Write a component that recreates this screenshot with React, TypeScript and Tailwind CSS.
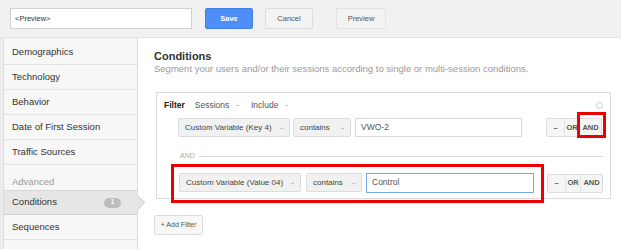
import React from "react";

const navItems = ["Demographics", "Technology", "Behavior", "Date of First Session", "Traffic Sources"];

function Caret() {
  return <span className="ml-[7px] text-[8px] text-[#777]">-</span>;
}

function Select({ label, width }: { label: string; width: string }) {
  return (
    <div
      className={`${width} h-[19px] flex items-center justify-between px-[6px] bg-[#f1f1f1] border border-[#dcdcdc] rounded-[2px] text-[8px] text-[#444]`}
    >
      <span>{label}</span>
      <span className="text-[8px] text-[#888]">-</span>
    </div>
  );
}

function OpButtons() {
  return (
    <div className="flex h-[19px] border border-[#dcdcdc] rounded-[2px] bg-[#f5f5f5] text-[7.5px] text-[#555] font-bold">
      <div className="w-[18px] flex items-center justify-center border-r border-[#e3e3e3]">–</div>
      <div className="w-[15px] flex items-center justify-center border-r border-[#e3e3e3]">OR</div>
      <div className="w-[21px] flex items-center justify-center">AND</div>
    </div>
  );
}

export default function App() {
  return (
    <div className="w-[621px] h-[249px] overflow-hidden bg-white font-['Liberation_Sans',Arial,sans-serif]">
      {/* top bar */}
      <div className="h-[38px] bg-[#f1f1f1] border-b border-[#e2e2e2] flex items-center pl-[10px]">
        <div className="w-[182px] h-[21px] bg-white border border-[#d0d0d0] flex items-center px-[4px] text-[7.5px] text-[#333]">
          &lt;Preview&gt;
        </div>
        <button className="ml-[13px] w-[48px] h-[21px] bg-[#4d8ef8] border border-[#3f7fe8] rounded-[2px] text-white text-[7.5px] font-bold">
          Save
        </button>
        <button className="ml-[12px] w-[48px] h-[21px] bg-[#f3f3f3] border border-[#dcdcdc] rounded-[2px] text-[#555] text-[7.5px]">
          Cancel
        </button>
        <button className="ml-[23px] w-[50px] h-[21px] bg-[#f3f3f3] border border-[#e2e2e2] rounded-[2px] text-[#555] text-[7.5px]">
          Preview
        </button>
      </div>

      <div className="flex h-[211px]">
        {/* sidebar */}
        <div className="w-[139px] pl-[3px] bg-[#ececec] flex flex-col">
          <div className="flex-1 bg-[#f7f7f7] border-l border-r border-[#dcdcdc] pt-[2px]">
            {navItems.map((item) => (
              <div
                key={item}
                className="h-[25px] flex items-center pl-[8px] border-b border-[#e2e2e2] text-[9.5px] text-[#333]"
              >
                {item}
              </div>
            ))}
            <div className="h-[25px] flex items-end pl-[8px] pb-[1px] text-[9.5px] text-[#999]">Advanced</div>
            <div className="relative h-[25px] flex items-center pl-[8px] pr-[16px] bg-[#e6e6e6] border-y border-[#d6d6d6] text-[9.5px] text-[#333]">
              <span className="flex-1">Conditions</span>
              <span className="w-[17px] h-[10px] rounded-full bg-[#bdbdbd] text-white text-[7px] font-bold flex items-center justify-center">
                1
              </span>
              <span className="absolute right-[-6px] top-[6px] w-[11px] h-[11px] rotate-45 bg-[#e6e6e6] border-t border-r border-[#d6d6d6]" />
            </div>
            <div className="h-[25px] flex items-center pl-[8px] border-b border-[#e2e2e2] text-[9.5px] text-[#333]">
              Sequences
            </div>
          </div>
        </div>

        {/* main */}
        <div className="flex-1 pl-[16px] pr-[10px] pt-[12px]">
          <div className="text-[11px] font-bold text-[#333] leading-[13px]">Conditions</div>
          <div className="text-[9.5px] text-[#9a9a9a] leading-[12px]">
            Segment your users and/or their sessions according to single or multi-session conditions.
          </div>

          <div className="mt-[17px] ml-[2px] w-[455px] h-[107px] border border-[#dcdcdc] pl-[7px] pr-[7px] pt-[7px]">
            <div className="flex items-center h-[10px] text-[8.5px]">
              <span className="font-bold text-[#222]">Filter</span>
              <span className="ml-[10px] text-[#555]">Sessions</span>
              <Caret />
              <span className="ml-[12px] text-[#555]">Include</span>
              <Caret />
              <span className="ml-auto w-[7px] h-[7px] rounded-full border border-[#ccc]" />
            </div>

            <div className="flex items-center mt-[8px] ml-[14px]">
              <Select label="Custom Variable (Key 4)" width="w-[112px]" />
              <div className="ml-[3px]">
                <Select label="contains" width="w-[58px]" />
              </div>
              <div className="ml-[4px] w-[167px] h-[19px] bg-white border border-[#d9d9d9] flex items-center px-[5px] text-[8.5px] text-[#555]">
                VWO-2
              </div>
              <div className="ml-[24px] relative">
                <OpButtons />
                <div className="absolute left-[31px] top-[-6px] w-[29px] h-[26px] border-[3px] border-[#ee0000]" />
              </div>
            </div>

            <div className="flex items-center mt-[14px] ml-[16px]">
              <span className="text-[7px] text-[#aaa]">AND</span>
              <div className="flex-1 ml-[4px] h-px bg-[#dedede]" />
            </div>

            <div className="flex items-center mt-[2px]">
              <div className="ml-[7px] border-[3px] border-[#ee0000] pl-[5px] pr-[7px] pt-[6px] pb-[7px] flex items-center">
                <Select label="Custom Variable (Value 04)" width="w-[122px]" />
                <div className="ml-[5px]">
                  <Select label="contains" width="w-[56px]" />
                </div>
                <div className="ml-[4px] w-[168px] h-[20px] bg-white border border-[#7aa7e6] flex items-center px-[5px] text-[8.5px] text-[#555]">
                  Control
                </div>
              </div>
              <div className="ml-[3px]">
                <OpButtons />
              </div>
            </div>
          </div>

          <button className="mt-[16px] w-[49px] h-[20px] bg-[#f7f7f7] border border-[#dcdcdc] rounded-[2px] text-[7px] text-[#555]">
            + Add Filter
          </button>
        </div>
      </div>
    </div>
  );
}
